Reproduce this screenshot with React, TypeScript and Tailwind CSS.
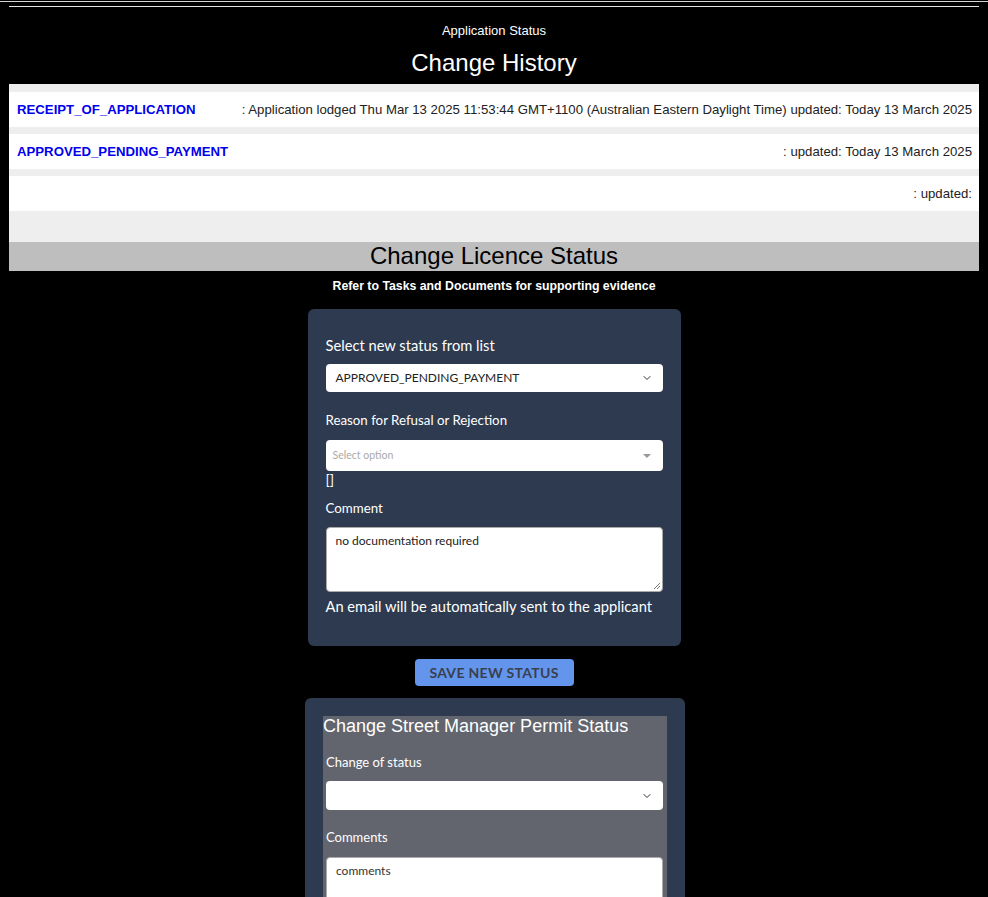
import React from "react";

const arial = { fontFamily: '"Liberation Sans", Arial, sans-serif' };
const lato = { fontFamily: 'Lato, "Noto Sans", sans-serif' };

function Chevron() {
  return (
    <svg width="12" height="12" viewBox="0 0 24 24" fill="none" stroke="#333" strokeWidth="2" strokeLinecap="round" strokeLinejoin="round">
      <path d="M6 9l6 6 6-6" />
    </svg>
  );
}

function Row({ left, right }: { left: string; right: string }) {
  return (
    <div className="flex h-[35px] items-center justify-between bg-white pl-[8px] pr-[7px] text-[13.2px] leading-[15px]">
      <span className="-mt-[1px] font-bold text-[#0000ee]">{left}</span>
      <span className="-mt-[1px] text-[#222]">{right}</span>
    </div>
  );
}

export default function App() {
  return (
    <div className="min-h-screen bg-black pb-10 text-white" style={arial}>
      <div className="h-px" />
      <div className="h-px bg-[#d4d4d4]" />
      <div className="px-[9px]">
        <div className="mt-[4px] h-px bg-[#e4e4e4]" />
        <div className="mt-[16px] text-center text-[13px] leading-[15px]">Application Status</div>
        <div className="mt-[11px] text-center text-[24px] leading-[28px]">Change History</div>
        <div className="mt-[7px] flex flex-col gap-[7px] bg-[#eeeeee] pb-[31px] pt-[8px]">
          <Row
            left="RECEIPT_OF_APPLICATION"
            right=": Application lodged Thu Mar 13 2025 11:53:44 GMT+1100 (Australian Eastern Daylight Time) updated: Today 13 March 2025"
          />
          <Row left="APPROVED_PENDING_PAYMENT" right=": updated: Today 13 March 2025" />
          <Row left="" right=": updated:" />
        </div>
        <div className="h-[29px] bg-[#bebebe] text-center text-[24px] leading-[28px] text-black">Change Licence Status</div>
      </div>
      <div className="mt-[8px] text-center text-[12.3px] font-bold leading-[15px]">
        Refer to Tasks and Documents for supporting evidence
      </div>

      <div className="flex flex-col items-center" style={lato}>
        <div className="mt-[15px] w-[373px] rounded-[6px] bg-[#2d3a50] px-[18px] pb-[30px] pt-[27px]">
          <div className="text-[14.7px] leading-[18px]">Select new status from list</div>
          <div className="mt-[10px] flex h-[28px] items-center justify-between rounded-[4px] bg-white pl-[10px] pr-[10px] text-[12px] text-[#222]">
            <span>APPROVED_PENDING_PAYMENT</span>
            <Chevron />
          </div>
          <div className="mt-[20px] text-[13.3px] leading-[17px]">Reason for Refusal or Rejection</div>
          <div className="mt-[11px] flex h-[31px] items-center justify-between rounded-[4px] bg-white pl-[7px] pr-[12px] text-[10.5px] text-[#aaaaaa]">
            <span>Select option</span>
            <span className="h-0 w-0 border-x-[4px] border-t-[4px] border-x-transparent border-t-[#999]" />
          </div>
          <div className="text-[14px] leading-[17px]">[]</div>
          <div className="mt-[12px] text-[13.3px] leading-[17px]">Comment</div>
          <div className="relative mt-[10px] h-[65px] rounded-[4px] border border-[#aaa] bg-white px-[9px] pt-[6px] text-[12px] leading-[14px] text-[#222]">
            no documentation required
            <svg className="absolute bottom-[1px] right-[1px]" width="9" height="9" viewBox="0 0 9 9" stroke="#777" strokeWidth="1">
              <path d="M8 2L2 8M8 5L5 8" />
            </svg>
          </div>
          <div className="mt-[5px] whitespace-nowrap text-[14.7px] leading-[19px]">An email will be automatically sent to the applicant</div>
        </div>

        <div className="mt-[13px] flex h-[27px] w-[159px] items-center justify-center rounded-[4px] bg-[#6495ed] text-[14px] font-bold tracking-[0.3px] text-[#38404f]">
          SAVE NEW STATUS
        </div>

        <div className="ml-[2px] mt-[12px] w-[380px] rounded-t-[6px] bg-[#2d3a50] px-[18px] pt-[18px]">
          <div className="bg-[#62656e] pb-[20px] pl-[3px] pr-[4px]">
            <div className="-ml-[3px] text-[18px] leading-[21px]" style={arial}>Change Street Manager Permit Status</div>
            <div className="mt-[17px] text-[13px] leading-[17px]">Change of status</div>
            <div className="mt-[10px] flex h-[29px] items-center justify-end rounded-[4px] bg-white pr-[10px]">
              <Chevron />
            </div>
            <div className="mt-[19px] text-[13px] leading-[17px]">Comments</div>
            <div className="mt-[11px] h-[70px] rounded-[4px] border border-[#aaa] bg-white px-[9px] pt-[6px] text-[12px] leading-[14px] text-[#333]">
              comments
            </div>
          </div>
        </div>
      </div>
    </div>
  );
}
